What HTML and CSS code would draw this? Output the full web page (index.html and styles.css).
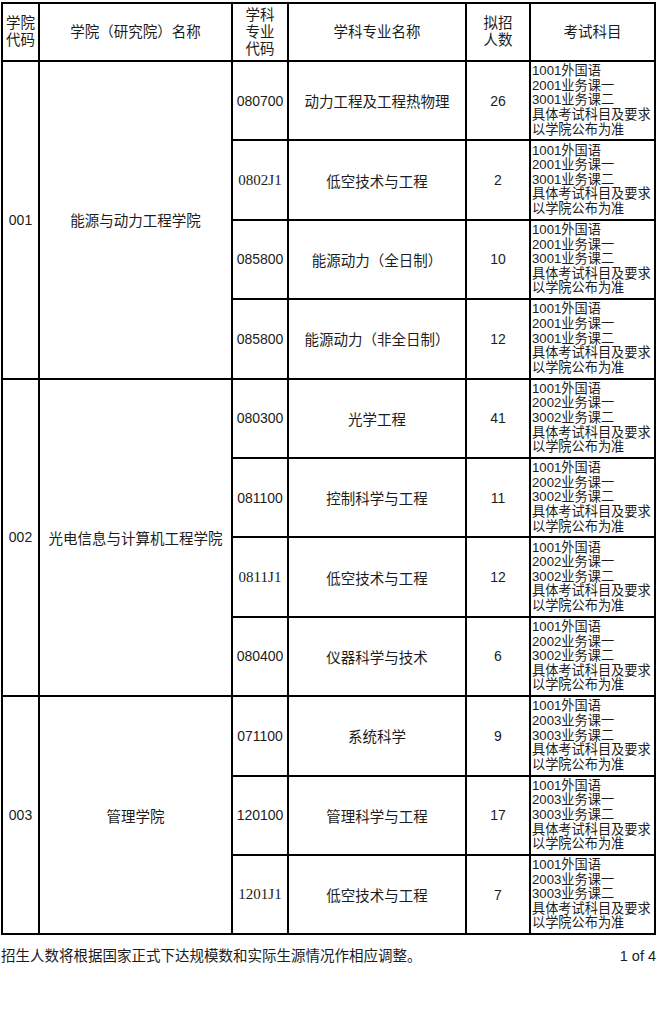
FILE: index.html
```html
<!DOCTYPE html>
<html lang="zh">
<head>
<meta charset="utf-8">
<title>招生目录</title>
<link rel="stylesheet" href="styles.css">
</head>
<body>
<table class="catalog">
  <colgroup>
    <col class="c1"><col class="c2"><col class="c3"><col class="c4"><col class="c5"><col class="c6">
  </colgroup>
  <thead>
    <tr class="head">
      <th>学院<br>代码</th>
      <th>学院（研究院）名称</th>
      <th>学科<br>专业<br>代码</th>
      <th>学科专业名称</th>
      <th>拟招<br>人数</th>
      <th>考试科目</th>
    </tr>
  </thead>
  <tbody>
    <tr>
      <td class="code" rowspan="4">001</td>
      <td class="college" rowspan="4">能源与动力工程学院</td>
      <td class="mcode">080700</td>
      <td class="name">动力工程及工程热物理</td>
      <td class="num">26</td>
      <td class="exam">1001外国语<br>2001业务课一<br>3001业务课二<br>具体考试科目及要求<br>以学院公布为准</td>
    </tr>
    <tr>
      <td class="mcode serif">0802J1</td>
      <td class="name">低空技术与工程</td>
      <td class="num">2</td>
      <td class="exam">1001外国语<br>2001业务课一<br>3001业务课二<br>具体考试科目及要求<br>以学院公布为准</td>
    </tr>
    <tr>
      <td class="mcode">085800</td>
      <td class="name">能源动力（全日制）</td>
      <td class="num">10</td>
      <td class="exam">1001外国语<br>2001业务课一<br>3001业务课二<br>具体考试科目及要求<br>以学院公布为准</td>
    </tr>
    <tr>
      <td class="mcode">085800</td>
      <td class="name">能源动力（非全日制）</td>
      <td class="num">12</td>
      <td class="exam">1001外国语<br>2001业务课一<br>3001业务课二<br>具体考试科目及要求<br>以学院公布为准</td>
    </tr>
    <tr>
      <td class="code" rowspan="4">002</td>
      <td class="college" rowspan="4">光电信息与计算机工程学院</td>
      <td class="mcode">080300</td>
      <td class="name">光学工程</td>
      <td class="num">41</td>
      <td class="exam">1001外国语<br>2002业务课一<br>3002业务课二<br>具体考试科目及要求<br>以学院公布为准</td>
    </tr>
    <tr>
      <td class="mcode">081100</td>
      <td class="name">控制科学与工程</td>
      <td class="num">11</td>
      <td class="exam">1001外国语<br>2002业务课一<br>3002业务课二<br>具体考试科目及要求<br>以学院公布为准</td>
    </tr>
    <tr>
      <td class="mcode serif">0811J1</td>
      <td class="name">低空技术与工程</td>
      <td class="num">12</td>
      <td class="exam">1001外国语<br>2002业务课一<br>3002业务课二<br>具体考试科目及要求<br>以学院公布为准</td>
    </tr>
    <tr>
      <td class="mcode">080400</td>
      <td class="name">仪器科学与技术</td>
      <td class="num">6</td>
      <td class="exam">1001外国语<br>2002业务课一<br>3002业务课二<br>具体考试科目及要求<br>以学院公布为准</td>
    </tr>
    <tr>
      <td class="code" rowspan="3">003</td>
      <td class="college" rowspan="3">管理学院</td>
      <td class="mcode">071100</td>
      <td class="name">系统科学</td>
      <td class="num">9</td>
      <td class="exam">1001外国语<br>2003业务课一<br>3003业务课二<br>具体考试科目及要求<br>以学院公布为准</td>
    </tr>
    <tr>
      <td class="mcode">120100</td>
      <td class="name">管理科学与工程</td>
      <td class="num">17</td>
      <td class="exam">1001外国语<br>2003业务课一<br>3003业务课二<br>具体考试科目及要求<br>以学院公布为准</td>
    </tr>
    <tr>
      <td class="mcode serif">1201J1</td>
      <td class="name">低空技术与工程</td>
      <td class="num">7</td>
      <td class="exam">1001外国语<br>2003业务课一<br>3003业务课二<br>具体考试科目及要求<br>以学院公布为准</td>
    </tr>
  </tbody>
</table>
<div class="footer">
  <span class="note">招生人数将根据国家正式下达规模数和实际生源情况作相应调整。</span>
  <span class="page">1 of 4</span>
</div>
</body>
</html>
```

FILE: styles.css
```css
html, body {
  margin: 0;
  padding: 0;
  background: #ffffff;
}

body {
  font-family: "Liberation Sans", "Noto Sans CJK SC", sans-serif;
  color: #1c1c1c;
  width: 657px;
}

.catalog {
  border-collapse: collapse;
  table-layout: fixed;
  margin: 2px 0 0 1px;
  width: 655px;
}

.c1 { width: 37px; }
.c2 { width: 193px; }
.c3 { width: 56px; }
.c4 { width: 178px; }
.c5 { width: 64px; }
.c6 { width: 125px; }

.catalog th,
.catalog td {
  border: 2px solid #000;
  padding: 0;
  text-align: center;
  vertical-align: middle;
  font-weight: normal;
}

.head th {
  height: 56px;
  font-size: 14.5px;
  line-height: 17px;
}

.catalog tbody td {
  height: 77.4px;
}

.code {
  font-size: 14px;
}

.college {
  font-size: 14.5px;
}

.mcode {
  font-size: 14px;
}

.mcode.serif {
  font-family: "Liberation Serif", "Noto Sans CJK SC", serif;
  font-size: 15px;
}

.name {
  font-size: 14.5px;
}

.num {
  font-size: 14px;
}

.catalog td.exam {
  text-align: left;
  font-size: 13.2px;
  line-height: 14.6px;
  padding-left: 1px;
  white-space: nowrap;
}

.footer {
  display: flex;
  justify-content: space-between;
  align-items: baseline;
  padding: 11px 1px 0 1px;
  font-size: 14.5px;
  line-height: 20px;
}
```
